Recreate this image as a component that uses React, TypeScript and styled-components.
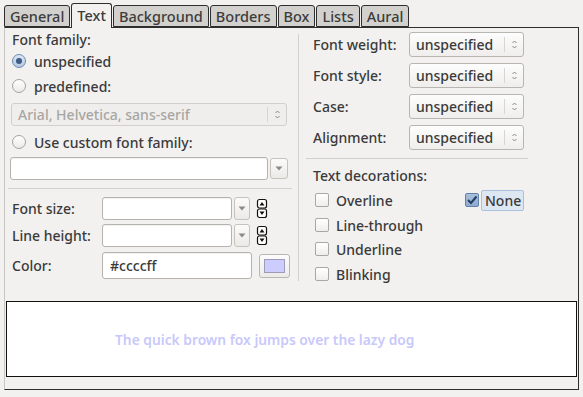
import React from "react";
import styled, { createGlobalStyle } from "styled-components";

const Global = createGlobalStyle`
  html, body { margin: 0; padding: 0; background: #f2f1f0; }
  body {
    font-family: "Noto Sans", "DejaVu Sans", sans-serif;
    font-size: 14px;
    font-weight: 500;
    color: #3a3a3a;
    width: 583px;
    height: 397px;
    overflow: hidden;
  }
  * { box-sizing: border-box; }
`;

const Window = styled.div`
  width: 583px;
  height: 397px;
  padding: 3px 4px 0 4px;
  display: flex;
  flex-direction: column;
`;

const TabBar = styled.div`
  display: flex;
  align-items: flex-end;
  height: 24px;
  gap: 1px;
  position: relative;
  z-index: 1;
`;

const Tab = styled.div<{ $active?: boolean }>`
  height: ${(p) => (p.$active ? 25 : 22)}px;
  margin-bottom: ${(p) => (p.$active ? -1 : 0)}px;
  padding: 0 5px;
  border: 1px solid #2e2e2e;
  border-bottom: ${(p) => (p.$active ? "none" : "1px solid #2e2e2e")};
  border-radius: 3px 3px 0 0;
  background: ${(p) => (p.$active ? "#f2f1f0" : "#d3d1cd")};
  font-size: 14.5px;
  line-height: ${(p) => (p.$active ? 22 : 20)}px;
  color: #3c3c3c;
  white-space: nowrap;
`;

const Panel = styled.div`
  height: 363px;
  border: 1px solid #2e2e2e;
  border-left-color: #c9c7c3;
  display: flex;
  flex-direction: column;
`;

const TopSection = styled.div`
  height: 273px;
  display: flex;
  padding-left: 3px;
`;

const Column = styled.div<{ $w: number; $ml?: number }>`
  width: ${(p) => p.$w}px;
  margin-left: ${(p) => p.$ml ?? 0}px;
  padding-top: 4px;
  display: flex;
  flex-direction: column;
`;

const VLine = styled.div`
  width: 1px;
  margin: 6px 0 20px 6px;
  background: #d3d1cc;
`;

const HLine = styled.div<{ $mt: number; $ml?: number; $w?: number }>`
  height: 1px;
  margin-top: ${(p) => p.$mt}px;
  margin-left: ${(p) => p.$ml ?? 0}px;
  width: ${(p) => (p.$w ? `${p.$w}px` : "100%")};
  background: #d3d1cc;
`;

const Heading = styled.div<{ $mt?: number; $pl: number }>`
  height: 16px;
  line-height: 16px;
  margin-top: ${(p) => p.$mt ?? 0}px;
  padding-left: ${(p) => p.$pl}px;
  white-space: nowrap;
`;

const OptionRow = styled.div<{ $mt: number; $pl: number }>`
  height: 18px;
  margin-top: ${(p) => p.$mt}px;
  padding-left: ${(p) => p.$pl}px;
  display: flex;
  align-items: center;
  white-space: nowrap;
`;

const RadioCircle = styled.span<{ $checked?: boolean }>`
  width: 14px;
  height: 14px;
  border-radius: 50%;
  flex: none;
  margin-right: 8px;
  display: flex;
  align-items: center;
  justify-content: center;
  border: 1px solid ${(p) => (p.$checked ? "#6a89b2" : "#a6a39e")};
  background: ${(p) =>
    p.$checked
      ? "linear-gradient(#dbe6f3, #b4c8e0)"
      : "linear-gradient(#ffffff, #ebeae8)"};
  &::after {
    content: "";
    display: ${(p) => (p.$checked ? "block" : "none")};
    width: 6px;
    height: 6px;
    border-radius: 50%;
    background: #3e5c85;
  }
`;

const CheckBox = styled.span<{ $checked?: boolean }>`
  width: 14px;
  height: 14px;
  flex: none;
  margin-right: 7px;
  border-radius: 2px;
  border: 1px solid ${(p) => (p.$checked ? "#5f80aa" : "#aaa7a2")};
  background: ${(p) =>
    p.$checked
      ? "linear-gradient(#a9c0dc, #8eabcf)"
      : "linear-gradient(#ffffff, #efeeec)"};
  display: flex;
  align-items: center;
  justify-content: center;
`;

const CheckItem = styled.div<{ $w?: number }>`
  display: flex;
  align-items: center;
  width: ${(p) => (p.$w ? `${p.$w}px` : "auto")};
`;

const FocusLabel = styled.span`
  height: 21px;
  line-height: 19px;
  padding: 0 2px 0 3px;
  margin-left: -5px;
  border: 1px solid #a9c1dc;
  border-radius: 2px;
  background: #dde7f2;
`;

const SelectBox = styled.div<{ $w: number; $h: number; $mt?: number; $ml?: number; $disabled?: boolean }>`
  width: ${(p) => p.$w}px;
  height: ${(p) => p.$h}px;
  margin-top: ${(p) => p.$mt ?? 0}px;
  margin-left: ${(p) => p.$ml ?? 0}px;
  flex: none;
  display: flex;
  align-items: center;
  border: 1px solid ${(p) => (p.$disabled ? "#d2d0cc" : "#b9b6b1")};
  border-radius: 3px;
  background: ${(p) =>
    p.$disabled ? "#efeeec" : "linear-gradient(#fdfdfd, #efeeec)"};
  color: ${(p) => (p.$disabled ? "#a8a6a3" : "#3a3a3a")};
`;

const SelectValue = styled.span`
  flex: 1;
  padding-left: 6px;
  white-space: nowrap;
  overflow: hidden;
`;

const SelectDivider = styled.span`
  width: 1px;
  height: 15px;
  background: #d7d5d1;
`;

const SelectArrows = styled.span`
  width: 18px;
  display: flex;
  justify-content: center;
  align-items: center;
`;

const FieldRow = styled.div<{ $mt: number; $h: number }>`
  height: ${(p) => p.$h}px;
  margin-top: ${(p) => p.$mt}px;
  padding-left: 4px;
  display: flex;
  align-items: center;
`;

const FieldLabel = styled.span<{ $w: number }>`
  width: ${(p) => p.$w}px;
  flex: none;
  white-space: nowrap;
`;

const Entry = styled.div<{ $w: number; $h: number }>`
  width: ${(p) => p.$w}px;
  height: ${(p) => p.$h}px;
  flex: none;
  border: 1px solid #b6b3ae;
  border-radius: 3px;
  background: #ffffff;
  box-shadow: inset 0 1px 1px rgba(0, 0, 0, 0.06);
  display: flex;
  align-items: center;
  padding-left: 7px;
`;

const DropButton = styled.div<{ $w: number; $h: number; $ml: number }>`
  width: ${(p) => p.$w}px;
  height: ${(p) => p.$h}px;
  margin-left: ${(p) => p.$ml}px;
  flex: none;
  border: 1px solid #c6c3be;
  border-radius: 3px;
  background: linear-gradient(#fbfbfa, #eceae7);
  display: flex;
  align-items: center;
  justify-content: center;
`;

const ComboRow = styled.div`
  height: 23px;
  margin-top: 6px;
  margin-left: 2px;
  display: flex;
  align-items: center;
`;

const SpinIcon = styled.svg`
  margin-left: 6px;
  flex: none;
`;

const ColorButton = styled.div`
  width: 31px;
  height: 24px;
  margin-left: 7px;
  flex: none;
  border: 1px solid #b9b6b1;
  border-radius: 3px;
  background: linear-gradient(#fcfcfc, #ecebe8);
  display: flex;
  align-items: center;
  justify-content: center;
`;

const Swatch = styled.span`
  width: 21px;
  height: 14px;
  background: #ccccff;
  border: 1px solid #9e9cb8;
`;

const SelectRow = styled.div<{ $mt: number }>`
  height: 25px;
  margin-top: ${(p) => p.$mt}px;
  padding-left: 8px;
  display: flex;
  align-items: center;
`;

const Preview = styled.div`
  height: 76px;
  margin: 0 1px 0 1px;
  background: #ffffff;
  border: 1px solid #111111;
  display: flex;
  align-items: center;
  padding-left: 108px;
  color: #c8c8fb;
  font-size: 13.8px;
  font-weight: 600;
  white-space: nowrap;
`;

const UpDown = () => (
  <svg width="7" height="11" viewBox="0 0 7 11">
    <path d="M1.5 4 L3.5 2 L5.5 4" fill="none" stroke="#8a8884" strokeWidth="1" />
    <path d="M1.5 7 L3.5 9 L5.5 7" fill="none" stroke="#8a8884" strokeWidth="1" />
  </svg>
);

const DownTri = () => (
  <svg width="8" height="5" viewBox="0 0 8 5">
    <path d="M0.5 0.5 L7.5 0.5 L4 4.5 Z" fill="#8c8a86" />
  </svg>
);

const Spin = () => (
  <SpinIcon width="12" height="21" viewBox="0 0 12 21">
    <rect x="1.5" y="1.5" width="9" height="8.5" rx="2" fill="#fff" stroke="#111" strokeWidth="1.2" />
    <rect x="1.5" y="11" width="9" height="8.5" rx="2" fill="#fff" stroke="#111" strokeWidth="1.2" />
    <path d="M3.5 7.5 L6 4 L8.5 7.5 Z" fill="#111" />
    <path d="M3.5 13.5 L6 17 L8.5 13.5 Z" fill="#111" />
  </SpinIcon>
);

const Check = () => (
  <svg width="12" height="12" viewBox="0 0 12 12">
    <path d="M2 6 L5 9 L10.5 2.5" fill="none" stroke="#243d5e" strokeWidth="2" />
  </svg>
);

const Select = ({ value, w, h, mt, ml, disabled }: { value: string; w: number; h: number; mt?: number; ml?: number; disabled?: boolean }) => (
  <SelectBox $w={w} $h={h} $mt={mt} $ml={ml} $disabled={disabled}>
    <SelectValue>{value}</SelectValue>
    <SelectDivider />
    <SelectArrows>
      <UpDown />
    </SelectArrows>
  </SelectBox>
);

const tabs = ["General", "Text", "Background", "Borders", "Box", "Lists", "Aural"];

const rightSelects = [
  { label: "Font weight:", mt: 0 },
  { label: "Font style:", mt: 6 },
  { label: "Case:", mt: 6 },
  { label: "Alignment:", mt: 6 },
];

export default function App() {
  return (
    <>
      <Global />
      <Window>
        <TabBar>
          {tabs.map((t) => (
            <Tab key={t} $active={t === "Text"}>
              {t}
            </Tab>
          ))}
        </TabBar>
        <Panel>
          <TopSection>
            <Column $w={284}>
              <Heading $pl={4}>Font family:</Heading>
              <OptionRow $mt={4} $pl={4}>
                <RadioCircle $checked />
                unspecified
              </OptionRow>
              <OptionRow $mt={7} $pl={4}>
                <RadioCircle />
                predefined:
              </OptionRow>
              <Select value="Arial, Helvetica, sans-serif" w={276} h={23} mt={8} ml={3} disabled />
              <OptionRow $mt={7} $pl={4}>
                <RadioCircle />
                Use custom font family:
              </OptionRow>
              <ComboRow>
                <Entry $w={258} $h={23} />
                <DropButton $w={18} $h={21} $ml={2}>
                  <DownTri />
                </DropButton>
              </ComboRow>
              <HLine $mt={8} />
              <FieldRow $mt={8} $h={23}>
                <FieldLabel $w={90}>Font size:</FieldLabel>
                <Entry $w={130} $h={23} />
                <DropButton $w={16} $h={23} $ml={2}>
                  <DownTri />
                </DropButton>
                <Spin />
              </FieldRow>
              <FieldRow $mt={4} $h={23}>
                <FieldLabel $w={90}>Line height:</FieldLabel>
                <Entry $w={130} $h={23} />
                <DropButton $w={16} $h={23} $ml={2}>
                  <DownTri />
                </DropButton>
                <Spin />
              </FieldRow>
              <FieldRow $mt={5} $h={27}>
                <FieldLabel $w={90}>Color:</FieldLabel>
                <Entry $w={150} $h={27}>#ccccff</Entry>
                <ColorButton>
                  <Swatch />
                </ColorButton>
              </FieldRow>
            </Column>
            <VLine />
            <Column $w={225} $ml={6}>
              {rightSelects.map((s) => (
                <SelectRow key={s.label} $mt={s.mt}>
                  <FieldLabel $w={96}>{s.label}</FieldLabel>
                  <Select value="unspecified" w={115} h={25} />
                </SelectRow>
              ))}
              <HLine $mt={8} $ml={1} $w={222} />
              <Heading $mt={9} $pl={8}>Text decorations:</Heading>
              <OptionRow $mt={7} $pl={10}>
                <CheckItem $w={150}>
                  <CheckBox />
                  Overline
                </CheckItem>
                <CheckItem>
                  <CheckBox $checked>
                    <Check />
                  </CheckBox>
                  <FocusLabel>None</FocusLabel>
                </CheckItem>
              </OptionRow>
              <OptionRow $mt={7} $pl={10}>
                <CheckBox />
                Line-through
              </OptionRow>
              <OptionRow $mt={6} $pl={10}>
                <CheckBox />
                Underline
              </OptionRow>
              <OptionRow $mt={7} $pl={10}>
                <CheckBox />
                Blinking
              </OptionRow>
            </Column>
          </TopSection>
          <Preview>The quick brown fox jumps over the lazy dog</Preview>
        </Panel>
      </Window>
    </>
  );
}
